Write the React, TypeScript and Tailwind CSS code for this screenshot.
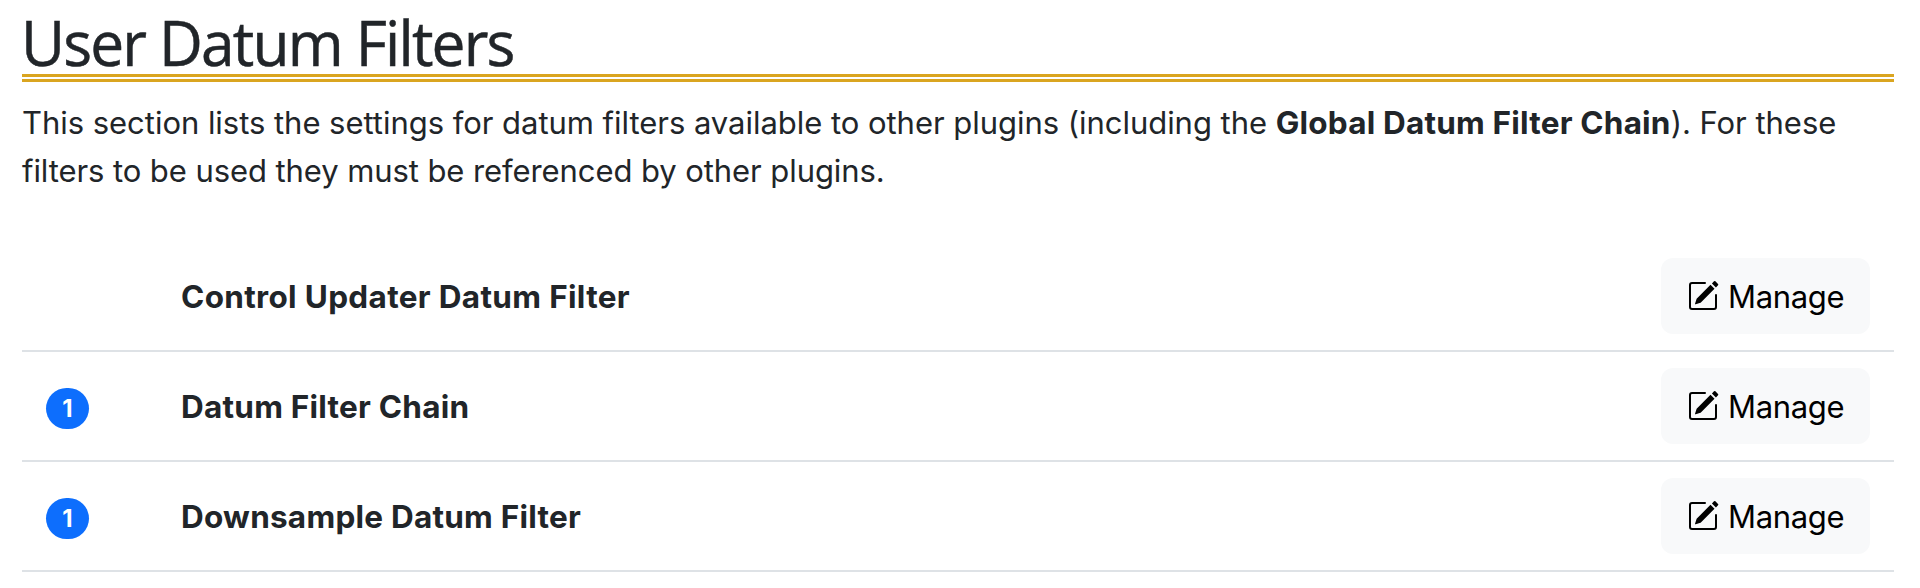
import { BsPencilSquare } from "react-icons/bs";

const filters = [
  { name: "Control Updater Datum Filter", count: 0, spacing: "tracking-[0.33px]" },
  { name: "Datum Filter Chain", count: 1, spacing: "tracking-[0.24px]" },
  { name: "Downsample Datum Filter", count: 1, spacing: "tracking-[0.24px]" },
];

export default function App() {
  return (
    <main className="h-[588px] bg-white pl-[22px] pr-[26px] pt-[8px] font-['Inter',sans-serif] text-[31px] leading-[48px] text-[#212529]">
      <h2 className="h-[74px] whitespace-nowrap border-b-[8px] border-double border-[#daa520] font-['Open_Sans',sans-serif] text-[62.5px] leading-[68px]">
        <span className="-ml-px inline-block origin-left scale-x-[0.967] tracking-[-1.9px] [-webkit-text-stroke:0.5px_#212529]">User Datum Filters</span>
      </h2>
      <p className="mt-[17px]">
        <span className="block whitespace-nowrap tracking-[-0.035px]">
          This section lists the settings for datum filters available to other plugins (including the{" "}
          <b className="text-[31.5px] tracking-[0.2px]">Global Datum Filter Chain</b>). For these
        </span>
        <span className="block whitespace-nowrap tracking-[-0.08px]">filters to be used they must be referenced by other plugins.</span>
      </p>
      <ul className="mt-[47px]">
        {filters.map((f) => (
          <li key={f.name} className="flex h-[110px] items-center border-b-2 border-[#dee2e6] pr-[24px]">
            <div className="w-[159px] pl-[24px] pt-[5px]">
              {f.count > 0 && (
                <span className="flex h-[41px] w-[43px] items-center justify-center rounded-full bg-[#0d6efd] pt-px text-[24px] font-bold leading-none text-white">{f.count}</span>
              )}
            </div>
            <b className={`pt-[2px] text-[31.5px] ${f.spacing}`}>{f.name}</b>
            <button className="ml-auto flex h-[76px] w-[209px] items-center gap-[9px] rounded-[12px] bg-[#f8f9fa] pl-[26px] text-black">
              <BsPencilSquare className="size-[32px]" />
              <span className="pt-[2px] tracking-[-0.35px]">Manage</span>
            </button>
          </li>
        ))}
      </ul>
    </main>
  );
}
